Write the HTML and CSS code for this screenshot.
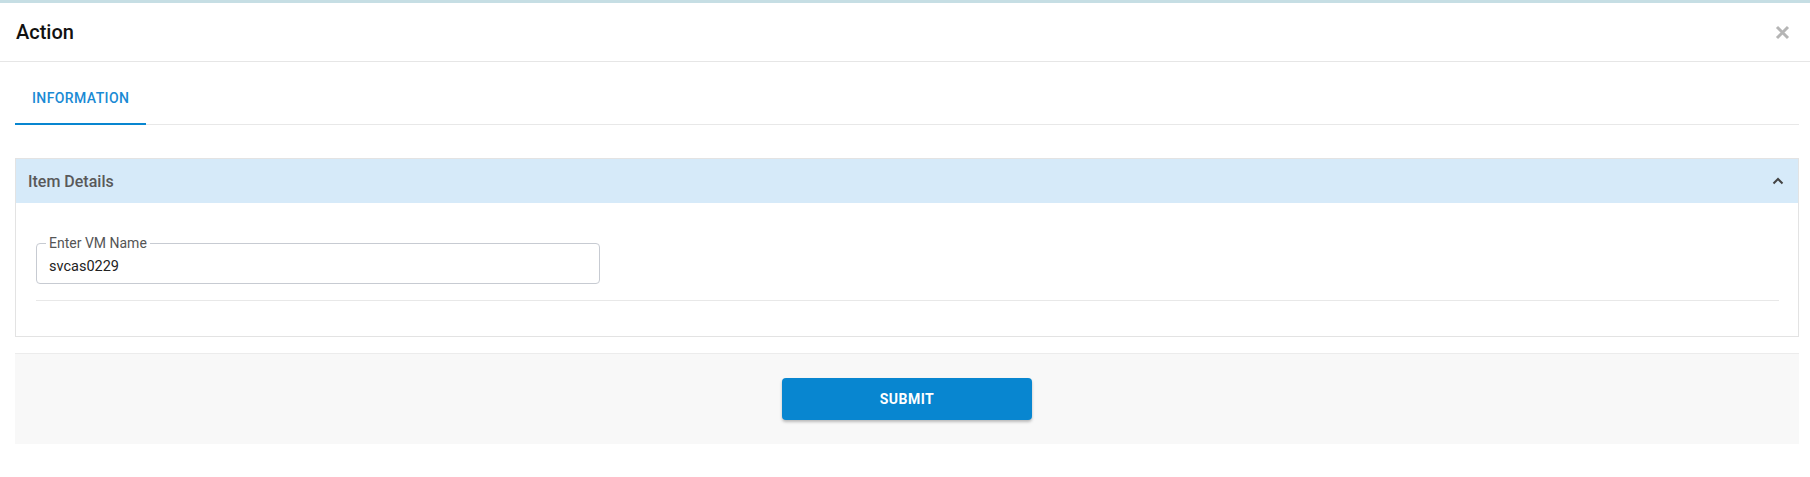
FILE: index.html
```html
<!DOCTYPE html>
<html lang="en">
<head>
    <meta charset="UTF-8">
    <title>Action</title>
    <link rel="stylesheet" href="styles.css">
</head>
<body>
<div class="modal">
    <div class="modal-topbar"></div>

    <div class="modal-header">
        <div class="modal-title">Action</div>
        <button class="modal-close" title="Close">
            <svg width="15" height="15" viewBox="0 0 15 15">
                <path d="M2 2 L13 13 M13 2 L2 13" stroke="#b5b5b5" stroke-width="3" fill="none"/>
            </svg>
        </button>
    </div>

    <div class="modal-body">
        <div class="tabs">
            <div class="tab tab-active">Information</div>
        </div>

        <div class="panel">
            <div class="panel-header">
                <div class="panel-title">Item Details</div>
                <svg class="panel-toggle" width="12" height="8" viewBox="0 0 12 8">
                    <path d="M1.5 6.5 L6 2 L10.5 6.5" stroke="#444" stroke-width="2" fill="none"/>
                </svg>
            </div>
            <div class="panel-body">
                <fieldset class="field">
                    <legend class="field-label">Enter VM Name</legend>
                    <input type="text" class="field-input" value="svcas0229" />
                </fieldset>
                <div class="divider"></div>
            </div>
        </div>

        <div class="footer">
            <button class="btn-submit">SUBMIT</button>
        </div>
    </div>
</div>
</body>
</html>
```

FILE: styles.css
```css
body {
    margin: 0;
    background-color: #fff;
    font-family: Roboto, "Liberation Sans", Arial, sans-serif;
    color: #222;
}

.modal-topbar {
    height: 3px;
    background-color: #c6dee4;
}

.modal-header {
    display: flex;
    align-items: center;
    justify-content: space-between;
    height: 58px;
    padding: 0 20px 0 16px;
    border-bottom: 1px solid #e6e6e6;
}
.modal-title {
    font-size: 20px;
    font-weight: 500;
    color: #111;
}
.modal-close {
    display: flex;
    padding: 0;
    border: 0;
    background: none;
    cursor: pointer;
}

.modal-body {
    padding: 0 11px 0 15px;
}

/* tabs */
.tabs {
    display: flex;
    margin-top: 12px;
    border-bottom: 1px solid #e8e8e8;
}
.tab {
    box-sizing: border-box;
    height: 51px;
    margin-bottom: -1px;
    padding: 0 17px;
    line-height: 49px;
    font-size: 14px;
    font-weight: 500;
    letter-spacing: 0.4px;
    text-transform: uppercase;
    color: #1a8ad4;
    border-bottom: 2px solid transparent;
}
.tab-active {
    border-bottom-color: #0886d0;
}

/* panel */
.panel {
    margin-top: 33px;
    border: 1px solid #e3e3e3;
}
.panel-header {
    display: flex;
    align-items: center;
    justify-content: space-between;
    height: 44px;
    padding: 0 14px 0 12px;
    background-color: #d6eaf9;
}
.panel-title {
    font-size: 16px;
    font-weight: 500;
    color: #595959;
}
.panel-body {
    padding: 32px 19px 35px 20px;
}

.field {
    width: 564px;
    box-sizing: border-box;
    margin: 0;
    padding: 0 12px;
    border: 1px solid #c7cbd2;
    border-radius: 4px;
}
.field-label {
    margin-left: -3px;
    padding: 0 3px;
    font-size: 14px;
    line-height: 16px;
    color: #555;
}
.field-input {
    display: block;
    width: 100%;
    height: 30px;
    margin: 0 0 2px;
    padding: 0;
    border: 0;
    outline: none;
    font-family: inherit;
    font-size: 14.5px;
    color: #222;
    background: transparent;
}

.divider {
    margin-top: 16px;
    height: 1px;
    background-color: #e8e8e8;
}

/* footer */
.footer {
    display: flex;
    justify-content: center;
    margin-top: 16px;
    padding: 24px 0;
    border-top: 1px solid #ececec;
    background-color: #f8f8f8;
}
.btn-submit {
    width: 250px;
    height: 42px;
    border: 0;
    border-radius: 4px;
    background-color: #0886d0;
    box-shadow: 0 2px 3px rgba(0, 0, 0, 0.25);
    color: #fff;
    font-family: inherit;
    font-size: 14px;
    font-weight: 700;
    letter-spacing: 0.5px;
    cursor: pointer;
}
```
